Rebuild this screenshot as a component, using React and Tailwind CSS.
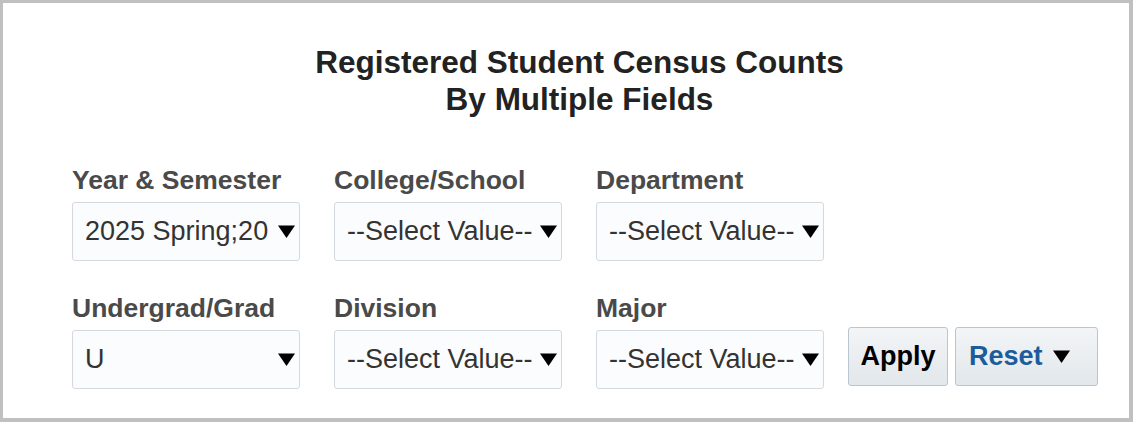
import React from "react";

const Arrow = ({ className = "" }) => (
  <svg width="19" height="15" viewBox="0 0 19 15" className={`shrink-0 ${className}`}>
    <path d="M1 1.5 L18 1.5 L9.5 14 Z" fill="#000" />
  </svg>
);

const Select = ({ value }) => (
  <div className="flex h-[59px] w-[228px] items-center rounded-[3px] border border-[#d3d9de] bg-[#fbfcfd] pl-[12px] pr-[3px]">
    <div className="flex-1 overflow-hidden whitespace-nowrap text-[27px] text-[#333333]">
      {value}
    </div>
    <Arrow className="ml-[5px]" />
  </div>
);

const Field = ({ label, value }) => (
  <div className="flex flex-col gap-[7px]">
    <div className="h-[30px] text-[26.5px] font-bold leading-[30px] text-[#4a4a4a]">
      {label}
    </div>
    <Select value={value} />
  </div>
);

export default function App() {
  return (
    <div
      className="h-[422px] w-[1133px] border-t-[3px] border-l-[3px] border-r-4 border-b-4 border-[#c0c0c0] bg-white"
      style={{ fontFamily: '"Liberation Sans", Arial, sans-serif' }}
    >
      <div className="pl-[27px] pt-[41px] text-center text-[31.5px] font-bold leading-[37px] text-[#222222]">
        <div>Registered Student Census Counts</div>
        <div>By Multiple Fields</div>
      </div>
      <div className="mt-[47px] flex flex-col gap-[32px] pl-[69px]">
        <div className="flex gap-[34px]">
          <Field label="Year & Semester" value="2025 Spring;20" />
          <Field label="College/School" value="--Select Value--" />
          <Field label="Department" value="--Select Value--" />
        </div>
        <div className="flex items-end gap-[34px]">
          <Field label="Undergrad/Grad" value="U" />
          <Field label="Division" value="--Select Value--" />
          <Field label="Major" value="--Select Value--" />
          <div className="-ml-[10px] mb-[3px] flex gap-[7px]">
            <button className="h-[59px] w-[100px] rounded-[3px] border border-[#b9c5cf] bg-gradient-to-b from-[#f3f5f7] to-[#e2e7eb] text-[27px] font-bold text-black">
              Apply
            </button>
            <button className="flex h-[59px] w-[143px] items-center gap-[9px] rounded-[3px] border border-[#b9c5cf] bg-gradient-to-b from-[#f3f5f7] to-[#e2e7eb] pl-[13px] text-[27px] font-bold text-[#1c5c9c]">
              Reset
              <Arrow />
            </button>
          </div>
        </div>
      </div>
    </div>
  );
}
